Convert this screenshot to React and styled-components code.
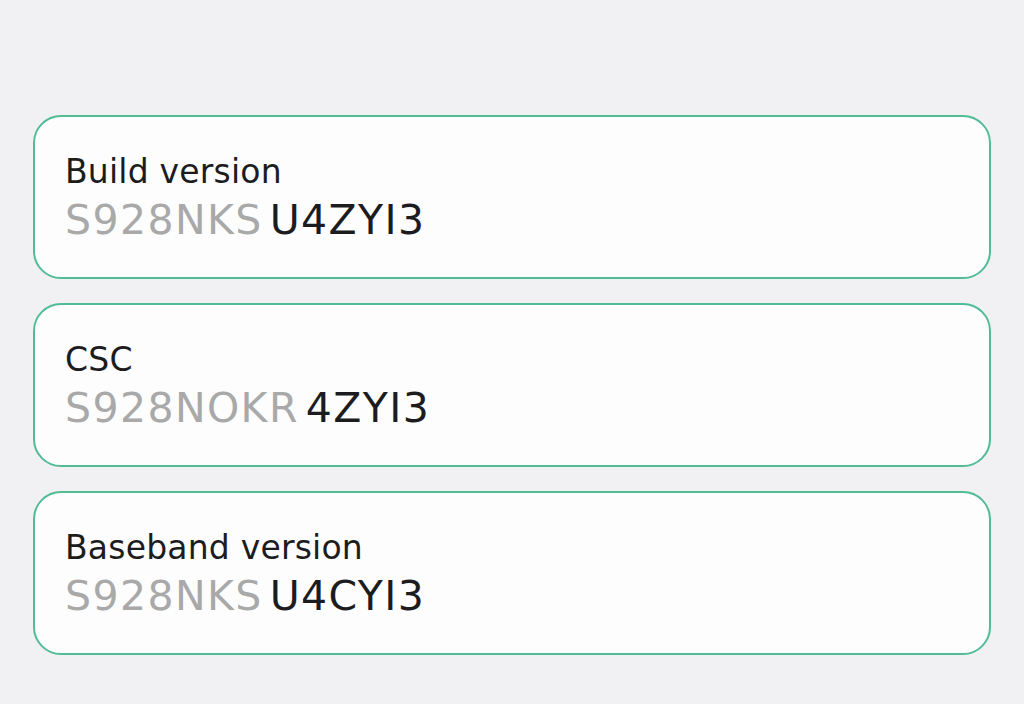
import React from 'react'
import styled, { createGlobalStyle } from 'styled-components'

const GlobalStyle = createGlobalStyle`
    body {
        margin: 0;
        background: #f1f1f3;
        font-family: "DejaVu Sans", "Noto Sans", sans-serif;
    }
`
const Page = styled.div`
    min-height: 704px;
    box-sizing: border-box;
    padding: 115px 33px 0 33px;
    display: flex;
    flex-direction: column;
    gap: 24px;
`
const Card = styled.div`
    height: 164px;
    box-sizing: border-box;
    background: #fdfdfe;
    border: 2.5px solid #52bc95;
    border-radius: 28px;
    padding: 4px 30px 0 30px;
    display: flex;
    flex-direction: column;
    justify-content: center;
`
const Title = styled.div`
    font-size: 33px;
    line-height: 42px;
    letter-spacing: 0.2px;
    color: #1c1c1e;
`
const Value = styled.div`
    font-size: 41px;
    line-height: 54px;
    letter-spacing: 1.4px;
    display: flex;
    gap: 7px;
`
const Part = styled.span`
    color: ${p => (p.$dim ? '#a9a9a9' : '#1c1c1e')};
`

const items = [
    { title: 'Build version', dim: 'S928NKS', rest: 'U4ZYI3' },
    { title: 'CSC', dim: 'S928NOKR', rest: '4ZYI3' },
    { title: 'Baseband version', dim: 'S928NKS', rest: 'U4CYI3' },
]

const App = () => (
    <>
        <GlobalStyle />
        <Page>
            {items.map(item => (
                <Card key={item.title}>
                    <Title>{item.title}</Title>
                    <Value>
                        <Part $dim>{item.dim}</Part>
                        <Part>{item.rest}</Part>
                    </Value>
                </Card>
            ))}
        </Page>
    </>
)
export default App
